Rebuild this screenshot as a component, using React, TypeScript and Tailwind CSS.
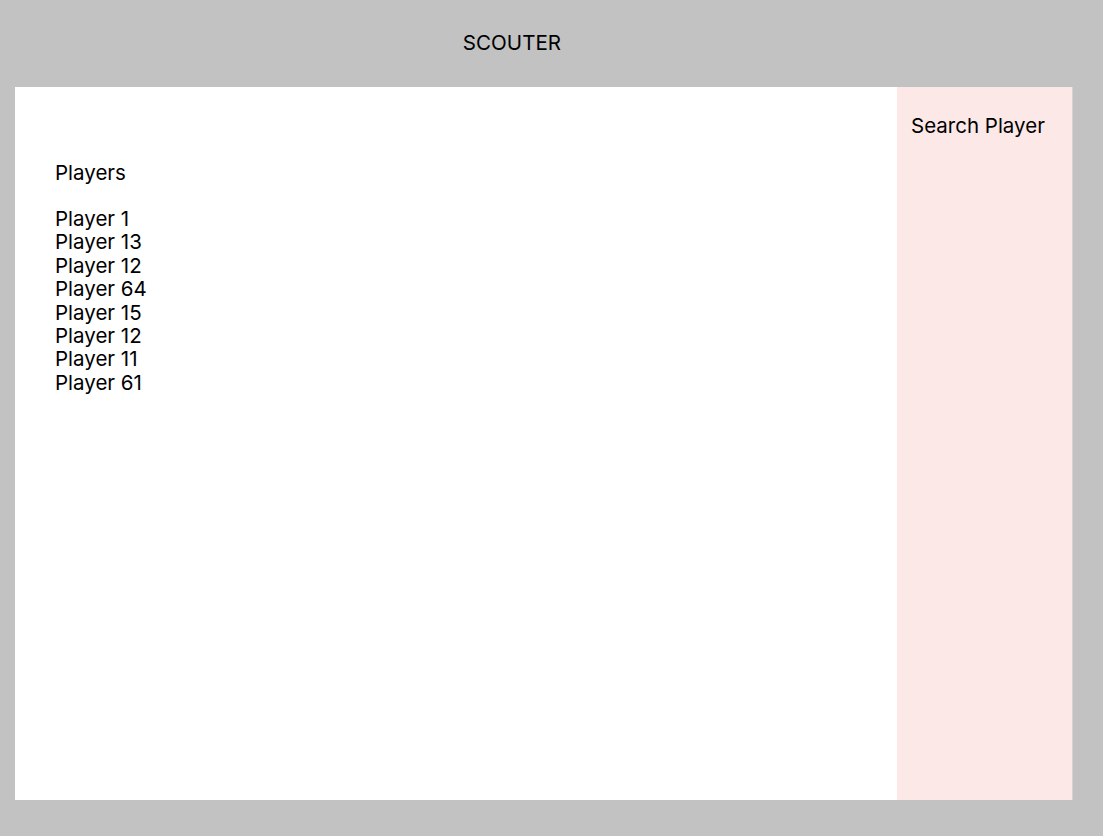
import React from "react";

const players = ["Player 1", "Player 13", "Player 12", "Player 64", "Player 15", "Player 12", "Player 11", "Player 61"];

export default function App() {
    return (
        <div className="min-h-[836px] w-full bg-[#c2c2c2] text-black" style={{ fontFamily: "Inter, 'Noto Sans', sans-serif" }}>
            {/* Header */}
            <header className="h-[86px] w-[1024px] flex items-center justify-center">
                <h1 className="text-[20.6px] leading-none">SCOUTER</h1>
            </header>

            {/* Main panel */}
            <div className="mt-[1px] ml-[15px] w-[1058px] h-[713px] flex">
                <main className="flex-1 bg-white pl-[40px] pt-[74px]">
                    <h2 className="text-[20.5px] leading-[24px]">Players</h2>
                    <ul className="mt-[22px]">
                        {players.map((p, i) => (
                            <li key={i} className="text-[20.5px] leading-[23.4px]">{p}</li>
                        ))}
                    </ul>
                </main>
                <aside className="w-[176px] bg-[#fce8e7] border-r border-[#d9d0cf] pl-[14px] pt-[27px]">
                    <p className="text-[20.5px] leading-[24px]">Search Player</p>
                </aside>
            </div>
        </div>
    );
}
